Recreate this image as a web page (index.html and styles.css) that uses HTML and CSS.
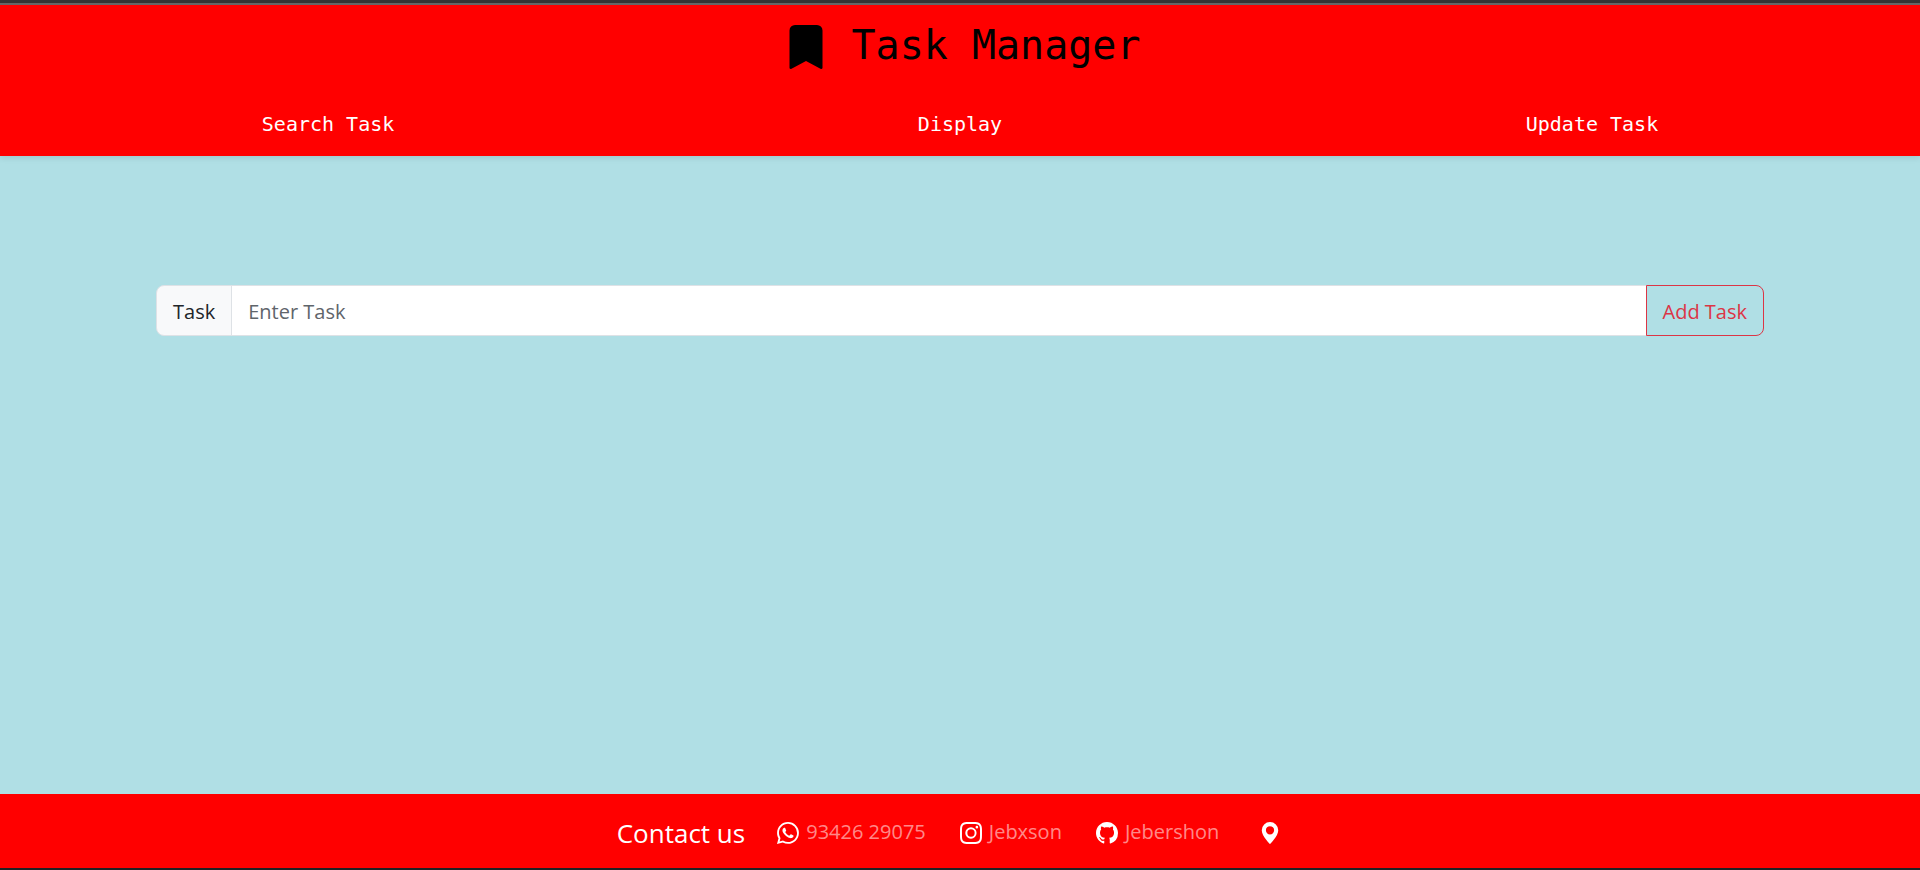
FILE: index.html
```html
<!DOCTYPE html>
<html lang="en">
<head>
<meta charset="utf-8">
<title>Task Manager</title>
<link rel="stylesheet" href="styles.css">
</head>
<body>
<header class="header">
  <div class="brand">
    <svg class="brand-icon" viewBox="0 0 16 16" fill="currentColor" aria-hidden="true"><path d="M2 2v13.5a.5.5 0 0 0 .74.439L8 13.069l5.26 2.87A.5.5 0 0 0 14 15.5V2a2 2 0 0 0-2-2H4a2 2 0 0 0-2 2z"/></svg>
    <h1 class="brand-title">Task Manager</h1>
  </div>
  <nav class="nav">
    <a class="nav-link" href="#search">Search Task</a>
    <a class="nav-link" href="#display">Display</a>
    <a class="nav-link" href="#update">Update Task</a>
  </nav>
</header>
<main class="main">
  <form class="input-group">
    <label class="input-label" for="task">Task</label>
    <input class="input-field" id="task" type="text" placeholder="Enter Task">
    <button class="input-button" type="button">Add Task</button>
  </form>
</main>
<footer class="footer">
  <h2 class="footer-title">Contact us</h2>
  <a class="contact" href="#whatsapp">
    <svg class="contact-icon" viewBox="0 0 16 16" fill="currentColor" aria-hidden="true"><path d="M13.601 2.326A7.854 7.854 0 0 0 7.994 0C3.627 0 .068 3.558.064 7.926c0 1.399.366 2.76 1.057 3.965L0 16l4.204-1.102a7.933 7.933 0 0 0 3.79.965h.004c4.368 0 7.926-3.558 7.93-7.93A7.898 7.898 0 0 0 13.6 2.326zM7.994 14.521a6.573 6.573 0 0 1-3.356-.92l-.24-.144-2.494.654.666-2.433-.156-.251a6.56 6.56 0 0 1-1.007-3.505c0-3.626 2.957-6.584 6.591-6.584a6.56 6.56 0 0 1 4.66 1.931 6.557 6.557 0 0 1 1.928 4.66c-.004 3.639-2.961 6.592-6.592 6.592zm3.615-4.934c-.197-.099-1.17-.578-1.353-.646-.182-.065-.315-.099-.445.099-.133.197-.513.646-.627.775-.114.133-.232.148-.43.05-.197-.1-.836-.308-1.592-.985-.59-.525-.985-1.175-1.103-1.372-.114-.198-.011-.304.088-.403.087-.088.197-.232.296-.346.1-.114.133-.198.198-.33.065-.134.034-.248-.015-.347-.05-.099-.445-1.076-.612-1.47-.16-.389-.323-.335-.445-.34-.114-.007-.247-.007-.38-.007a.729.729 0 0 0-.529.247c-.182.198-.691.677-.691 1.654 0 .977.71 1.916.81 2.049.098.133 1.394 2.132 3.383 2.992.47.205.84.326 1.129.418.475.152.904.129 1.246.08.38-.058 1.171-.48 1.338-.943.164-.464.164-.86.114-.943-.049-.084-.182-.133-.38-.232z"/></svg>
    <span class="contact-text">93426 29075</span>
  </a>
  <a class="contact" href="#instagram">
    <svg class="contact-icon" viewBox="0 0 16 16" fill="currentColor" aria-hidden="true"><path d="M8 0C5.829 0 5.556.01 4.703.048 3.85.088 3.269.222 2.76.42a3.917 3.917 0 0 0-1.417.923A3.927 3.927 0 0 0 .42 2.76C.222 3.268.087 3.85.048 4.7.01 5.555 0 5.827 0 8.001c0 2.172.01 2.444.048 3.297.04.852.174 1.433.372 1.942.205.526.478.972.923 1.417.444.445.89.719 1.416.923.51.198 1.09.333 1.942.372C5.555 15.99 5.827 16 8 16s2.444-.01 3.298-.048c.851-.04 1.434-.174 1.943-.372a3.916 3.916 0 0 0 1.416-.923c.445-.445.718-.891.923-1.417.197-.509.332-1.09.372-1.942C15.99 10.445 16 10.173 16 8s-.01-2.445-.048-3.299c-.04-.851-.175-1.433-.372-1.941a3.926 3.926 0 0 0-.923-1.417A3.911 3.911 0 0 0 13.24.42c-.51-.198-1.092-.333-1.943-.372C10.443.01 10.172 0 7.998 0h.003zm-.717 1.442h.718c2.136 0 2.389.007 3.232.046.78.035 1.204.166 1.486.275.373.145.64.319.92.599.28.28.453.546.598.92.11.281.24.705.275 1.485.039.843.047 1.096.047 3.231s-.008 2.389-.047 3.232c-.035.78-.166 1.203-.275 1.485a2.47 2.47 0 0 1-.599.919c-.28.28-.546.453-.92.598-.28.11-.704.24-1.485.276-.843.038-1.096.047-3.232.047s-2.39-.009-3.233-.047c-.78-.036-1.203-.166-1.485-.276a2.478 2.478 0 0 1-.92-.598 2.48 2.48 0 0 1-.6-.92c-.109-.281-.24-.705-.275-1.485-.038-.843-.046-1.096-.046-3.233 0-2.136.008-2.388.046-3.231.036-.78.166-1.204.276-1.486.145-.373.319-.64.599-.92.28-.28.546-.453.92-.598.282-.11.705-.24 1.485-.276.738-.034 1.024-.044 2.515-.045v.002zm4.988 1.328a.96.96 0 1 0 0 1.92.96.96 0 0 0 0-1.92zm-4.27 1.122a4.109 4.109 0 1 0 0 8.217 4.109 4.109 0 0 0 0-8.217zm0 1.441a2.667 2.667 0 1 1 0 5.334 2.667 2.667 0 0 1 0-5.334z"/></svg>
    <span class="contact-text">Jebxson</span>
  </a>
  <a class="contact" href="#github">
    <svg class="contact-icon" viewBox="0 0 16 16" fill="currentColor" aria-hidden="true"><path d="M8 0C3.58 0 0 3.58 0 8c0 3.54 2.29 6.53 5.47 7.59.4.07.55-.17.55-.38 0-.19-.01-.82-.01-1.49-2.01.37-2.53-.49-2.69-.94-.09-.23-.48-.94-.82-1.13-.28-.15-.68-.52-.01-.53.63-.01 1.08.58 1.23.82.72 1.21 1.87.87 2.33.66.07-.52.28-.87.51-1.07-1.78-.2-3.64-.89-3.64-3.95 0-.87.31-1.59.82-2.15-.08-.2-.36-1.02.08-2.12 0 0 .67-.21 2.2.82.64-.18 1.32-.27 2-.27.68 0 1.36.09 2 .27 1.53-1.04 2.2-.82 2.2-.82.44 1.1.16 1.92.08 2.12.51.56.82 1.27.82 2.15 0 3.07-1.87 3.75-3.65 3.95.29.25.54.73.54 1.48 0 1.07-.01 1.93-.01 2.2 0 .21.15.46.55.38A8.012 8.012 0 0 0 16 8c0-4.42-3.58-8-8-8z"/></svg>
    <span class="contact-text">Jebershon</span>
  </a>
  <a class="contact contact-place" href="#location" aria-label="Location">
    <svg class="contact-icon" viewBox="0 0 16 16" fill="currentColor" aria-hidden="true"><path d="M8 16s6-5.686 6-10A6 6 0 0 0 2 6c0 4.314 6 10 6 10zm0-7a3 3 0 1 1 0-6 3 3 0 0 1 0 6z"/></svg>
  </a>
</footer>
</body>
</html>
```
FILE: styles.css
```css
* {
  box-sizing: border-box;
}

body {
  display: flex;
  flex-direction: column;
  min-height: 100vh;
  margin: 0;
  background: #b0dfe5;
  border-top: 3px solid #353535;
  border-bottom: 2px solid #202124;
  font-family: "Open Sans", "Noto Sans", sans-serif;
  font-size: 20px;
  line-height: 32px;
}

.header {
  padding: 12px 0 16px;
  background: #ff0000;
  border-top: 2px solid #666666;
  box-shadow: 0 2px 6px rgba(0, 0, 0, 0.1);
  font-family: "DejaVu Sans Mono", monospace;
}

.brand {
  display: flex;
  align-items: center;
  justify-content: center;
  gap: 24px;
  height: 60px;
  padding-left: 4px;
}

.brand-icon {
  width: 44px;
  height: 44px;
}

.brand-title {
  margin: 0;
  padding-bottom: 4px;
  font-size: 40px;
  font-weight: 400;
  line-height: 52px;
}

.nav {
  display: flex;
  justify-content: space-around;
  padding-top: 27px;
}

.nav-link {
  padding: 4px 0 0;
  color: #ffffff;
  text-decoration: none;
}

.main {
  flex: 1;
  padding: 129px 156px;
}

.input-group {
  display: flex;
  height: 51px;
}

.input-label,
.input-field,
.input-button {
  padding: 10px 16px 8px;
  border: 1px solid #dee2e6;
  font: inherit;
}

.input-label {
  border-radius: 8px 0 0 8px;
  background: #f8f9fa;
  color: #212529;
}

.input-field {
  flex: 1;
  min-width: 0;
  margin-left: -1px;
  border-radius: 0;
  background: #ffffff;
  color: #212529;
}

.input-field::placeholder {
  color: #5f656b;
  opacity: 1;
}

.input-button {
  margin-left: -1px;
  border-color: #dc3545;
  border-radius: 0 8px 8px 0;
  background: transparent;
  color: #dc3545;
}

.footer {
  display: flex;
  align-items: center;
  justify-content: center;
  gap: 32px;
  height: 74px;
  padding-top: 4px;
  background: #ff0000;
  color: #ffffff;
}

.footer-title {
  margin: 0;
  font-size: 26px;
  font-weight: 400;
}

.contact {
  display: flex;
  align-items: center;
  gap: 7px;
  padding-right: 2px;
  color: #ffffff;
  text-decoration: none;
}

.contact-icon {
  width: 22px;
  height: 22px;
}

.contact-text {
  padding-bottom: 2px;
  color: rgba(255, 255, 255, 0.55);
}

.contact-place {
  padding: 0 22px 0 6px;
}
```
